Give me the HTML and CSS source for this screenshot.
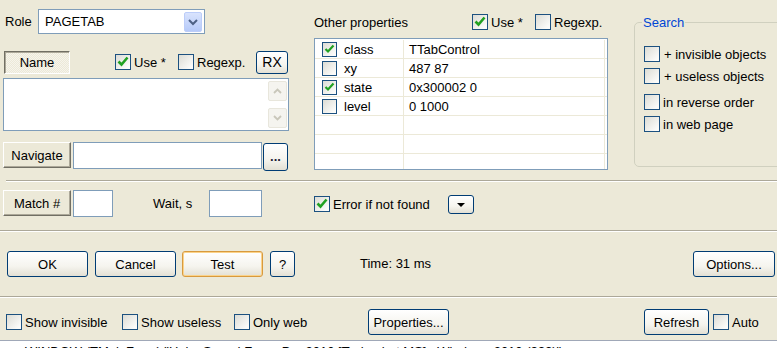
FILE: index.html
```html
<!DOCTYPE html>
<html>
<head>
    <meta charset="UTF-8">
    <title>Find object</title>
    <link rel="stylesheet" href="styles.css">
</head>
<body>
<div class="dlg">

    <div class="top">
        <div class="left">
            <div class="role-row">
                <span class="lbl">Role</span>
                <div class="combo">
                    <span>PAGETAB</span>
                    <span class="combo-btn"><svg width="12" height="8" viewBox="0 0 12 8"><path d="M2 2 L6 6 L10 2" fill="none" stroke="#4d6185" stroke-width="2"/></svg></span>
                </div>
            </div>

            <div class="name-row">
                <span class="cbtn pressed name-btn">Name</span>
                <label class="cb use-a"><span class="chk on"><svg width="14" height="14" viewBox="0 0 14 14"><path d="M2.5 6.5 L5.5 9.5 L11.5 2.5" fill="none" stroke="#21a121" stroke-width="2.6"/></svg></span>Use *</label>
                <label class="cb rx-a"><span class="chk"></span>Regexp.</label>
                <span class="btn rx">RX</span>
            </div>

            <div class="memo">
                <div class="sb">
                    <span class="sb-btn"><svg width="9" height="6" viewBox="0 0 9 6"><path d="M1 5 L4.5 1.5 L8 5" fill="none" stroke="#c9c7ba" stroke-width="1.8"/></svg></span>
                    <span class="sb-btn"><svg width="9" height="6" viewBox="0 0 9 6"><path d="M1 1 L4.5 4.5 L8 1" fill="none" stroke="#c9c7ba" stroke-width="1.8"/></svg></span>
                </div>
            </div>

            <div class="nav-row">
                <span class="cbtn nav-btn">Navigate</span>
                <span class="edit nav-edit"></span>
                <span class="btn dots">...</span>
            </div>
        </div>

        <div class="mid">
            <div class="mid-head">
                <span class="op-lbl">Other properties</span>
                <label class="cb use-b"><span class="chk on"><svg width="14" height="14" viewBox="0 0 14 14"><path d="M2.5 6.5 L5.5 9.5 L11.5 2.5" fill="none" stroke="#21a121" stroke-width="2.6"/></svg></span>Use *</label>
                <label class="cb"><span class="chk"></span>Regexp.</label>
            </div>

            <div class="grid">
                <div class="grow">
                    <div class="gc1"><span class="chk sm on"><svg width="13" height="13" viewBox="0 0 13 13"><path d="M2.5 6 L5 8.5 L10.5 2.5" fill="none" stroke="#21a121" stroke-width="2.2"/></svg></span>class</div>
                    <div class="gc2">TTabControl</div>
                </div>
                <div class="grow">
                    <div class="gc1"><span class="chk sm"></span>xy</div>
                    <div class="gc2">487 87</div>
                </div>
                <div class="grow">
                    <div class="gc1"><span class="chk sm on"><svg width="13" height="13" viewBox="0 0 13 13"><path d="M2.5 6 L5 8.5 L10.5 2.5" fill="none" stroke="#21a121" stroke-width="2.2"/></svg></span>state</div>
                    <div class="gc2">0x300002 0</div>
                </div>
                <div class="grow">
                    <div class="gc1"><span class="chk sm"></span>level</div>
                    <div class="gc2">0 1000</div>
                </div>
                <div class="grow"><div class="gc1"></div><div class="gc2"></div></div>
                <div class="grow"><div class="gc1"></div><div class="gc2"></div></div>
                <div class="grow"><div class="gc1"></div><div class="gc2"></div></div>
            </div>
        </div>

        <fieldset class="search">
            <legend>Search</legend>
            <label class="cb s1"><span class="chk"></span>+ invisible objects</label>
            <label class="cb s2"><span class="chk"></span>+ useless objects</label>
            <label class="cb s3"><span class="chk"></span>in reverse order</label>
            <label class="cb s4"><span class="chk"></span>in web page</label>
        </fieldset>
    </div>

    <div class="sep first"></div>

    <div class="match-row">
        <span class="cbtn match-btn">Match #</span>
        <span class="edit match-edit"></span>
        <span class="wait-lbl">Wait, s</span>
        <span class="edit wait-edit"></span>
        <label class="cb err"><span class="chk on"><svg width="14" height="14" viewBox="0 0 14 14"><path d="M2.5 6.5 L5.5 9.5 L11.5 2.5" fill="none" stroke="#21a121" stroke-width="2.6"/></svg></span>Error if not found</label>
        <span class="btn drop"><svg width="10" height="6" viewBox="0 0 10 6"><path d="M1 1 L9 1 L5 5 Z" fill="#000"/></svg></span>
    </div>

    <div class="sep"></div>

    <div class="btn-row">
        <span class="btn wide">OK</span>
        <span class="btn wide cancel">Cancel</span>
        <span class="btn wide test">Test</span>
        <span class="btn help">?</span>
        <span class="time">Time: 31 ms</span>
        <span class="btn wide opts">Options...</span>
    </div>

    <div class="sep"></div>

    <div class="bottom-row">
        <label class="cb b1"><span class="chk"></span>Show invisible</label>
        <label class="cb b2"><span class="chk"></span>Show useless</label>
        <label class="cb b3"><span class="chk"></span>Only web</label>
        <span class="btn wide props">Properties...</span>
        <span class="btn refresh">Refresh</span>
        <label class="cb auto"><span class="chk"></span>Auto</label>
    </div>

    <div class="status">WINDOW (TMainForm) "Help: Sound Forge Pro 2010 [Trebuchet MS] : Windows 2010 (???)"</div>

</div>
</body>
</html>
```

FILE: styles.css
```css
/* base */
*, *:after, *:before {
    box-sizing: border-box;
    margin: 0;
    padding: 0;
}

body {
    background: #ece9d8;
    color: #000;
    font-family: "Liberation Sans", Arial, sans-serif;
    font-size: 13px;
    line-height: 15px;
}

.dlg {
    width: 777px;
    height: 348px;
    overflow: hidden;
}

/* controls */
.btn {
    display: flex;
    align-items: center;
    justify-content: center;
    border: 1px solid #003c74;
    border-radius: 3px;
    background: linear-gradient(#ffffff, #f5f4ee 60%, #e3e0d4);
    flex: none;
}

.cbtn {
    display: flex;
    align-items: center;
    justify-content: center;
    border: 1px solid;
    border-color: #fff #716f64 #716f64 #fff;
    box-shadow: inset -1px -1px #aca899;
    background: #ece9d8;
    flex: none;
}
    .cbtn.pressed {
        border-color: #716f64 #fff #fff #716f64;
        box-shadow: inset 1px 1px #aca899;
        background: repeating-conic-gradient(#f6f4ec 0 25%, #ece9d8 0 50%) 0 0 / 2px 2px;
    }

.edit {
    display: block;
    background: #fff;
    border: 1px solid #7f9db9;
    flex: none;
}

.cb {
    display: flex;
    align-items: center;
    gap: 3px;
    flex: none;
}

.chk {
    display: inline-flex;
    align-items: center;
    justify-content: center;
    width: 16px;
    height: 16px;
    border: 1px solid #1c5180;
    background: linear-gradient(135deg, #dcdcd5, #fbfbf9 85%);
    flex: none;
}
    .chk.sm {
        width: 15px;
        height: 15px;
    }

.sep {
    height: 2px;
    border-top: 1px solid #aca899;
    border-bottom: 1px solid #fff;
}
    .sep.first {
        margin-left: 6px;
    }

/* top part */
.top {
    display: flex;
    height: 180px;
}

.left {
    width: 300px;
    flex: none;
}

.role-row {
    display: flex;
    align-items: center;
    height: 25px;
    margin-top: 9px;
}
    .role-row .lbl {
        width: 38px;
        padding-left: 5px;
    }

.combo {
    display: flex;
    align-items: center;
    justify-content: space-between;
    width: 167px;
    height: 25px;
    padding: 0 2px 0 6px;
    background: #fff;
    border: 1px solid #7f9db9;
}

.combo-btn {
    display: flex;
    align-items: center;
    justify-content: center;
    width: 18px;
    height: 20px;
    border: 1px solid #bccdf9;
    border-radius: 2px;
    background: linear-gradient(#d9e3fd, #b6caf9);
}

.name-row {
    display: flex;
    align-items: center;
    height: 24px;
    margin-top: 16px;
    padding-left: 4px;
}
    .name-btn {
        width: 66px;
        height: 23px;
    }
    .use-a {
        margin-left: 45px;
        width: 63px;
    }
    .rx-a {
        width: 78px;
    }
    .rx {
        width: 32px;
        height: 23px;
        font-size: 14px;
    }

.memo {
    display: flex;
    justify-content: flex-end;
    width: 286px;
    height: 53px;
    margin: 4px 0 0 3px;
    padding: 2px 1px;
    background: #fff;
    border: 1px solid #7f9db9;
}

.sb {
    display: flex;
    flex-direction: column;
    justify-content: space-between;
    width: 19px;
}

.sb-btn {
    display: flex;
    align-items: center;
    justify-content: center;
    height: 20px;
    border: 1px solid #e8e6dc;
    border-radius: 2px;
    background: #f5f4ef;
}

.nav-row {
    display: flex;
    align-items: flex-start;
    margin-top: 11px;
    padding-left: 3px;
}
    .nav-btn {
        width: 68px;
        height: 26px;
    }
    .nav-edit {
        width: 189px;
        height: 27px;
        margin-left: 2px;
    }
    .dots {
        width: 25px;
        height: 28px;
        margin: 1px 0 0 1px;
        align-items: flex-end;
        padding-bottom: 6px;
        font-weight: bold;
        color: #223;
    }

.mid {
    width: 294px;
    margin-left: 14px;
    flex: none;
}

.mid-head {
    display: flex;
    align-items: center;
    height: 16px;
    margin-top: 14px;
}
    .op-lbl {
        width: 158px;
    }
    .use-b {
        width: 63px;
    }

.grid {
    height: 132px;
    margin-top: 8px;
    padding-top: 1px;
    background: #fff;
    border: 1px solid #7f9db9;
    overflow: hidden;
}

.grow {
    display: flex;
    height: 19px;
    border-bottom: 1px solid #ece9d8;
}

.gc1 {
    display: flex;
    align-items: center;
    gap: 7px;
    width: 89px;
    padding-left: 7px;
    border-right: 1px solid #ece9d8;
}

.gc2 {
    display: flex;
    align-items: center;
    width: 201px;
    padding-left: 5px;
    border-right: 1px solid #ece9d8;
}

.search {
    width: 160px;
    height: 152px;
    margin: 15px 0 0 26px;
    padding: 0 0 0 7px;
    border: 1px solid #d0d0bf;
    border-radius: 5px;
    flex: none;
}
    .search legend {
        padding: 0 1px;
        color: #0046d5;
        line-height: 15px;
    }
    .search .cb {
        margin-left: 2px;
    }
    .s1 { margin-top: 16px; }
    .s2 { margin-top: 6px; }
    .s3 { margin-top: 10px; }
    .s4 { margin-top: 6px; }
    .s1, .s2 { gap: 4px; }

/* match row */
.match-row {
    display: flex;
    align-items: flex-start;
    height: 48px;
    padding-top: 8px;
}
    .match-btn {
        width: 68px;
        height: 26px;
        margin-left: 3px;
    }
    .match-edit {
        width: 40px;
        height: 27px;
        margin-left: 2px;
    }
    .wait-lbl {
        width: 56px;
        margin-left: 40px;
        line-height: 27px;
    }
    .wait-edit {
        width: 53px;
        height: 27px;
    }
    .err {
        width: 134px;
        height: 28px;
        margin-left: 52px;
    }
    .drop {
        width: 26px;
        height: 19px;
        margin-top: 5px;
    }

/* buttons row */
.btn-row {
    display: flex;
    align-items: flex-start;
    height: 64px;
    padding: 19px 0 0 7px;
}
    .btn.wide {
        width: 81px;
        height: 26px;
    }
    .cancel { margin-left: 7px; }
    .test {
        margin-left: 6px;
        border-color: #d89a3e;
        box-shadow: inset 0 0 0 1px #fbd38a;
    }
    .help {
        width: 25px;
        height: 26px;
        margin-left: 7px;
    }
    .time {
        margin-left: 65px;
        line-height: 26px;
    }
    .btn.opts {
        width: 82px;
        margin-left: auto;
        margin-right: 2px;
    }

/* bottom row */
.bottom-row {
    display: flex;
    align-items: center;
    height: 42px;
    padding-top: 11px;
    padding-bottom: 5px;
}
    .b1 { margin-left: 6px; width: 116px; }
    .b2 { width: 112px; }
    .b3 { width: 134px; }
    .refresh {
        width: 65px;
        height: 26px;
        margin-left: 195px;
    }
    .auto { margin-left: 4px; }

.status {
    height: 20px;
    padding: 3px 0 0 25px;
    background: #fff;
    border-top: 1px solid #a0a8b8;
    white-space: nowrap;
}
```
